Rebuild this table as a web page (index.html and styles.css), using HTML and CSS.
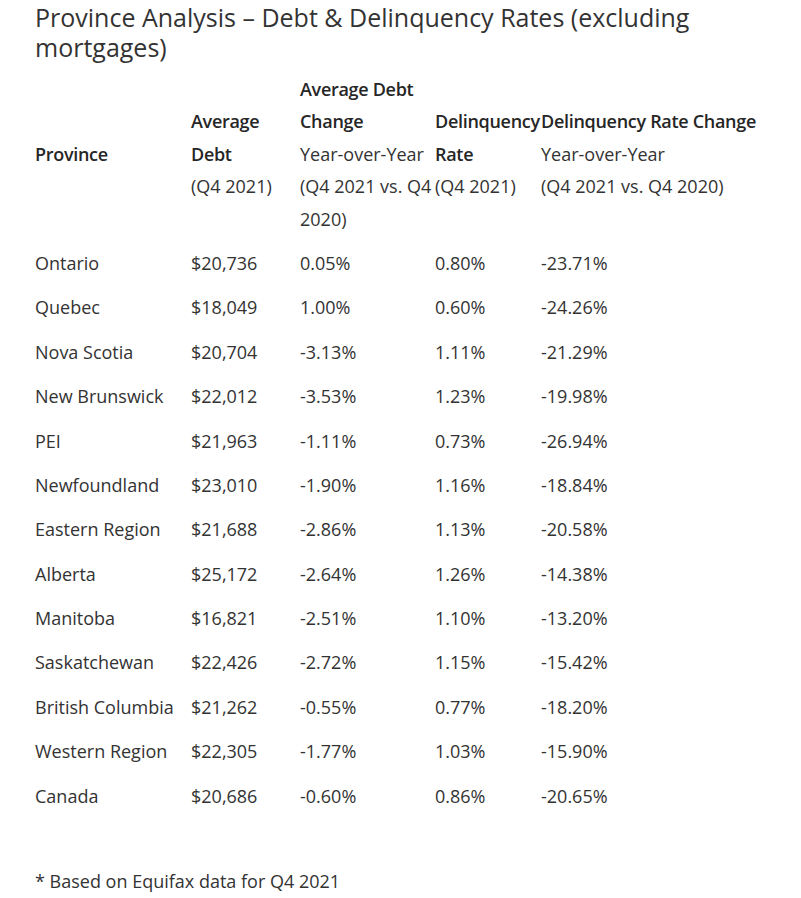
FILE: index.html
```html
<!DOCTYPE html>
<html lang="en">
<head>
<meta charset="utf-8">
<title>Province Analysis</title>
<link rel="stylesheet" href="styles.css">
</head>
<body>
<div class="page">
  <h1 class="title">Province Analysis – Debt &amp; Delinquency Rates (excluding mortgages)</h1>
  <table class="data">
    <colgroup>
      <col class="c1"><col class="c2"><col class="c3"><col class="c4"><col class="c5">
    </colgroup>
    <thead>
      <tr>
        <th><strong>Province</strong></th>
        <th><strong>Average Debt</strong><br>(Q4 2021)</th>
        <th><strong>Average Debt Change</strong><br>Year-over-Year<br>(Q4 2021 vs. Q4 2020)</th>
        <th><strong>Delinquency Rate</strong><br>(Q4 2021)</th>
        <th><strong>Delinquency Rate Change</strong><br>Year-over-Year<br>(Q4 2021 vs. Q4 2020)</th>
      </tr>
    </thead>
    <tbody>
      <tr><td>Ontario</td><td>$20,736</td><td>0.05%</td><td>0.80%</td><td>-23.71%</td></tr>
      <tr><td>Quebec</td><td>$18,049</td><td>1.00%</td><td>0.60%</td><td>-24.26%</td></tr>
      <tr><td>Nova Scotia</td><td>$20,704</td><td>-3.13%</td><td>1.11%</td><td>-21.29%</td></tr>
      <tr><td>New Brunswick</td><td>$22,012</td><td>-3.53%</td><td>1.23%</td><td>-19.98%</td></tr>
      <tr><td>PEI</td><td>$21,963</td><td>-1.11%</td><td>0.73%</td><td>-26.94%</td></tr>
      <tr><td>Newfoundland</td><td>$23,010</td><td>-1.90%</td><td>1.16%</td><td>-18.84%</td></tr>
      <tr><td>Eastern Region</td><td>$21,688</td><td>-2.86%</td><td>1.13%</td><td>-20.58%</td></tr>
      <tr><td>Alberta</td><td>$25,172</td><td>-2.64%</td><td>1.26%</td><td>-14.38%</td></tr>
      <tr><td>Manitoba</td><td>$16,821</td><td>-2.51%</td><td>1.10%</td><td>-13.20%</td></tr>
      <tr><td>Saskatchewan</td><td>$22,426</td><td>-2.72%</td><td>1.15%</td><td>-15.42%</td></tr>
      <tr><td>British Columbia</td><td>$21,262</td><td>-0.55%</td><td>0.77%</td><td>-18.20%</td></tr>
      <tr><td>Western Region</td><td>$22,305</td><td>-1.77%</td><td>1.03%</td><td>-15.90%</td></tr>
      <tr><td>Canada</td><td>$20,686</td><td>-0.60%</td><td>0.86%</td><td>-20.65%</td></tr>
    </tbody>
  </table>
  <p class="note">* Based on Equifax data for Q4 2021</p>
</div>
</body>
</html>
```
FILE: styles.css
```css
html, body {
  margin: 0;
  padding: 0;
  background: #ffffff;
}
.page {
  padding: 2px 35px 0 35px;
  font-family: "Open Sans", "Liberation Sans", sans-serif;
  color: #333333;
  font-size: 18px;
  line-height: 1.8;
}
.title {
  margin: 0;
  font-size: 25px;
  font-weight: 400;
  line-height: 30px;
  color: #333333;
  max-width: 700px;
}
.data {
  margin-top: 5px;
  border-collapse: collapse;
  table-layout: fixed;
  width: 731px;
}
.c1 { width: 156px; }
.c2 { width: 109px; }
.c3 { width: 135px; }
.c4 { width: 106px; }
.c5 { width: 225px; }
.data th,
.data td {
  padding: 6px 0;
  text-align: left;
  vertical-align: middle;
  font-weight: 400;
}
.data th strong {
  font-weight: 600;
  letter-spacing: -0.3px;
  color: #262626;
}
.note {
  margin: 47px 0 0 0;
}
```
